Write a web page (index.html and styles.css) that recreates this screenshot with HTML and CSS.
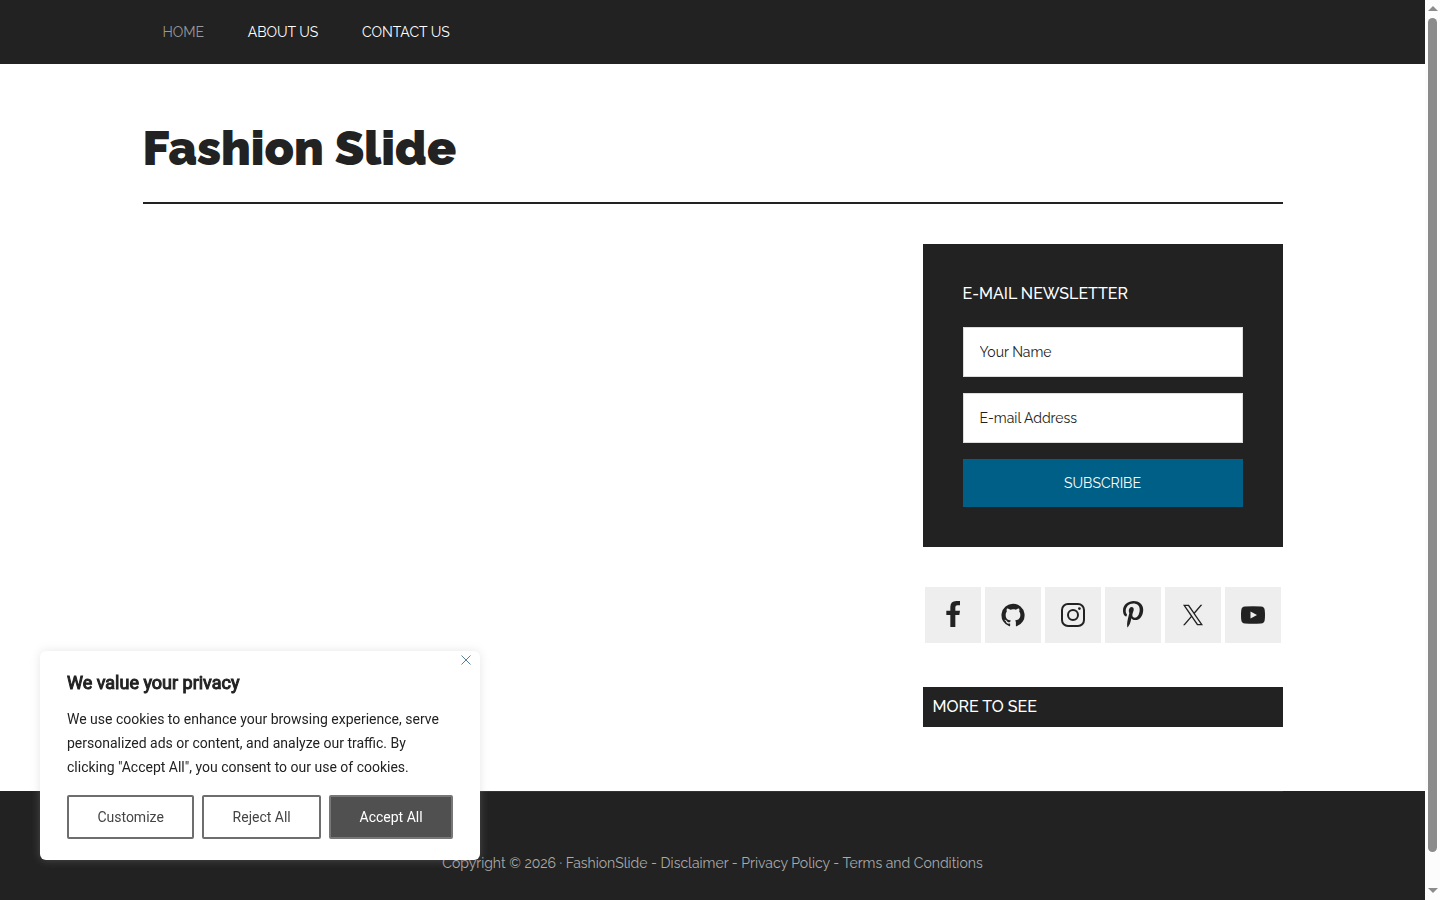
FILE: index.html
```html
<!DOCTYPE html>
<html lang="en-US">
<head>
    <meta charset="UTF-8">
    <meta name="viewport" content="width=device-width, initial-scale=1.0">
    <title>Fashion Slide</title>
    <link rel="stylesheet" href="styles.css">
</head>
<body>
    <div class="site-container">
        <nav class="nav-primary" aria-label="Main">
            <div class="wrap">
                <ul class="menu">
                    <li><a class="current" href="#">Home</a></li>
                    <li><a href="#">About Us</a></li>
                    <li><a href="#">Contact Us</a></li>
                </ul>
            </div>
        </nav>

        <header class="site-header wrap">
            <h1 class="site-title"><a href="#">Fashion Slide</a></h1>
        </header>

        <div class="site-inner wrap">
            <main class="content"></main>

            <aside class="sidebar">
                <section class="widget newsletter">
                    <h2 class="widget-title">E-Mail Newsletter</h2>
                    <form class="newsletter-form">
                        <input type="text" placeholder="Your Name" aria-label="Your Name">
                        <input type="email" placeholder="E-mail Address" aria-label="E-mail Address">
                        <button type="submit">Subscribe</button>
                    </form>
                </section>

                <ul class="social-icons">
                    <li><a href="#" aria-label="Facebook"><svg class="tall" viewBox="63 63 72 84"><path d="M120 63V76H112Q106 76 106 82V92H120L118 105H106V141H91V105H79V92H91V81Q91 63 109 63Z"/></svg></a></li>
                    <li><a href="#" aria-label="GitHub"><svg viewBox="0 0 16 16"><path d="M8 .500a7.700 7.700 0 0 0-2.430 15c.380.070.520-.170.520-.370v-1.440c-2.140.470-2.590-.910-2.590-.910-.350-.890-.850-1.130-.850-1.130-.700-.480.050-.470.050-.470.770.050 1.180.800 1.180.800.690 1.170 1.800.830 2.240.640.070-.500.270-.840.490-1.030-1.710-.190-3.510-.850-3.510-3.800 0-.840.300-1.530.790-2.070-.080-.190-.340-.980.080-2.040 0 0 .650-.210 2.120.790A7.400 7.400 0 0 1 8 4.210c.650 0 1.310.090 1.930.260 1.470-1 2.120-.790 2.120-.790.420 1.060.160 1.850.080 2.040.490.540.790 1.230.790 2.070 0 2.960-1.800 3.610-3.520 3.800.280.240.520.710.520 1.430v2.120c0 .200.140.440.530.370A7.700 7.700 0 0 0 8 .500z"/></svg></a></li>
                    <li><a href="#" aria-label="Instagram"><svg class="outline" viewBox="0 0 24 24"><rect x="1" y="1" width="22" height="22" rx="6"/><circle cx="12" cy="12" r="5"/><circle class="dot" cx="18.400" cy="5.600" r="1.400"/></svg></a></li>
                    <li><a href="#" aria-label="Pinterest"><svg class="tall" viewBox="-2 0 24 28"><path d="M0 9.328C0 3.500 5.328 0 10.719 0c4.953 0 9.500 3.406 9.500 8.656 0 4.937-2.516 10.406-8.125 10.406-1.328 0-3.016-.672-3.656-1.906C7.234 21.938 7.328 22.656 4.672 26.300l-.219.078-.141-.156c-.094-1-.234-1.984-.234-2.984 0-3.234 1.484-7.906 2.219-11.047-.406-.812-.516-1.766-.516-2.656 0-1.609 1.109-3.641 2.922-3.641 1.328 0 2.047 1.016 2.047 2.281 0 2.109-1.422 4.078-1.422 6.125 0 1.391 1.156 2.359 2.484 2.359 3.719 0 4.875-5.359 4.875-8.219 0-3.828-2.719-5.906-6.391-5.906-4.281 0-7.578 3.078-7.578 7.422 0 2.094 1.281 3.156 1.281 3.656 0 .422-.313 1.906-.844 1.906-.078 0-.187-.031-.266-.047C.578 14.766 0 11.609 0 9.328z"/></svg></a></li>
                    <li><a href="#" aria-label="X"><svg class="x-logo" viewBox="0 0 1200 1227"><path d="M714.163 519.284 1160.890 0H1055.030L667.137 450.887 357.328 0H0L468.492 681.821 0 1226.370H105.866L515.491 750.218 842.672 1226.370H1200L714.137 519.284ZM569.165 687.828 521.697 619.934 144.011 79.694H306.615L611.412 515.685 658.880 583.579 1055.080 1150.300H892.476L569.165 687.854Z"/></svg></a></li>
                    <li><a href="#" aria-label="YouTube"><svg viewBox="0 0 24 24"><path fill-rule="evenodd" d="M4 3.500Q12 2.900 20 3.500 23.400 3.700 23.700 7 24.300 12 23.700 17 23.400 20.300 20 20.500 12 21.100 4 20.500.600 20.300.300 17-.300 12 .300 7 .600 3.700 4 3.500zM9.500 8.500v7L16 12z"/></svg></a></li>
                </ul>

                <h2 class="widget-title more-title">More to See</h2>
            </aside>
        </div>

        <footer class="site-footer">
            <div class="wrap">
                <p>Copyright © 2026 · <a href="#">FashionSlide</a> - <a href="#">Disclaimer</a> - <a href="#">Privacy Policy</a> - <a href="#">Terms and Conditions</a></p>
            </div>
        </footer>
    </div>

    <div class="scrollbar" aria-hidden="true">
        <span class="arrow arrow-up"></span>
        <span class="thumb"></span>
        <span class="arrow arrow-down"></span>
    </div>

    <div class="cookie-box" role="dialog" aria-labelledby="cookie-title">
        <button class="cookie-close" type="button" aria-label="Close"><svg viewBox="0 0 10 10"><path d="M.500.500l9 9M9.500.500l-9 9"/></svg></button>
        <h2 id="cookie-title">We value your privacy</h2>
        <p>We use cookies to enhance your browsing experience, serve personalized ads or content, and analyze our traffic. By clicking "Accept All", you consent to our use of cookies.</p>
        <div class="cookie-buttons">
            <button type="button">Customize</button>
            <button type="button">Reject All</button>
            <button type="button" class="accept">Accept All</button>
        </div>
    </div>
</body>
</html>
```
FILE: styles.css
```css
* {
    box-sizing: border-box;
}

body {
    display: flex;
    height: 100vh;
    margin: 0;
    overflow: hidden;
    background-color: #fff;
    color: #222;
    font-family: Raleway, Lato, sans-serif;
    font-size: 14px;
    line-height: 24px;
}

a {
    color: inherit;
    text-decoration: none;
}

ul {
    list-style: none;
    margin: 0;
    padding: 0;
}

.site-container {
    display: flex;
    flex: 1;
    flex-direction: column;
    min-width: 0;
    overflow: hidden;
}

.wrap {
    width: 100%;
    max-width: 1140px;
    margin: 0 auto;
}

/* Navigation */
.nav-primary {
    background-color: #222;
    color: #fff;
}

.menu {
    text-transform: uppercase;
}

.menu li {
    display: inline-block;
}

.menu a {
    display: block;
    padding: 20px;
}

.menu .current {
    color: #999;
}

/* Header */
.site-header {
    padding: 54px 0 24px;
    border-bottom: 2px solid #222;
}

.site-title {
    margin: 0;
    font-size: 48px;
    font-weight: 900;
    line-height: 60px;
}

/* Content and sidebar */
.site-inner {
    display: flex;
    gap: 40px;
    padding: 40px 0 64px;
}

.content {
    flex: 1;
}

.sidebar {
    width: 360px;
}

.newsletter {
    margin-bottom: 40px;
    padding: 40px;
    background-color: #222;
}

.widget-title {
    margin: 0 0 23px;
    color: #fff;
    font-size: 16px;
    font-weight: 500;
    line-height: 20px;
    text-transform: uppercase;
}

.newsletter-form {
    display: grid;
    gap: 16px;
}

.newsletter-form input {
    width: 100%;
    height: 50px;
    padding: 16px;
    border: 1px solid #ddd;
    background-color: #fff;
    color: #222;
    font: inherit;
}

.newsletter-form input::placeholder {
    color: #222;
    opacity: 1;
}

.newsletter-form button {
    height: 48px;
    border: 0;
    background-color: #005f87;
    color: #fff;
    font: inherit;
    text-transform: uppercase;
    cursor: pointer;
}

.social-icons {
    display: flex;
    justify-content: center;
    gap: 4px;
    margin-bottom: 44px;
}

.social-icons a {
    display: flex;
    align-items: center;
    justify-content: center;
    width: 56px;
    height: 56px;
    background-color: #eee;
}

.social-icons svg {
    width: 24px;
    height: 26px;
    fill: #222;
}

.social-icons .tall {
    height: 28px;
}

.social-icons .x-logo {
    width: 20px;
    height: 22px;
}

.social-icons .outline {
    fill: none;
    stroke: #222;
    stroke-width: 2;
}

.social-icons .outline .dot {
    fill: #222;
    stroke: none;
}

.more-title {
    margin: 0;
    padding: 10px;
    background-color: #222;
}

/* Footer */
.site-footer {
    flex: 1 0 auto;
    background-color: #222;
    color: #aaa;
    text-align: center;
}

.site-footer .wrap {
    padding: 59px 0 40px;
    border-top: 1px solid #333;
}

.site-footer p {
    margin: 0;
}

/* Scrollbar */
.scrollbar {
    display: flex;
    flex-direction: column;
    align-items: center;
    gap: 7px;
    width: 15px;
    padding: 6px 0 7px;
    background-color: #fcfcfc;
}

.thumb {
    flex: 1;
    width: 9px;
    margin-bottom: 29px;
    border-radius: 5px;
    background-color: #8b8b8b;
}

.arrow {
    border: 5px solid transparent;
}

.arrow-up {
    border-top: 0;
    border-bottom-color: #8b8b8b;
}

.arrow-down {
    border-top-color: #8b8b8b;
    border-bottom: 0;
}

/* Cookie notice */
.cookie-box {
    position: fixed;
    bottom: 40px;
    left: 40px;
    width: 440px;
    padding: 20px 27px 21px;
    border-radius: 6px;
    background-color: #fff;
    box-shadow: 0 0 10px rgba(172, 171, 171, 0.3);
    font-family: Roboto, sans-serif;
    font-size: 14px;
}

.cookie-box h2 {
    margin: 0 0 12px;
    font-size: 18px;
    font-weight: 400;
    line-height: 24px;
    -webkit-text-stroke: 1px #222;
}

.cookie-box p {
    margin: 0 0 16px;
}

.cookie-buttons {
    display: flex;
    gap: 8px;
}

.cookie-buttons button {
    flex: 1 1 auto;
    height: 44px;
    padding: 8px 27px;
    border: 2px solid #6e6e6e;
    border-radius: 2px;
    background-color: transparent;
    color: #444;
    font: inherit;
    cursor: pointer;
}

.cookie-buttons .accept {
    border-color: #777;
    background-color: #505050;
    color: #fff;
}

.cookie-close {
    position: absolute;
    top: 4px;
    right: 9px;
    display: flex;
    padding: 0;
    border: 0;
    background: none;
    cursor: pointer;
}

.cookie-close svg {
    width: 10px;
    height: 10px;
    fill: none;
    stroke: #5b7f99;
}
```
